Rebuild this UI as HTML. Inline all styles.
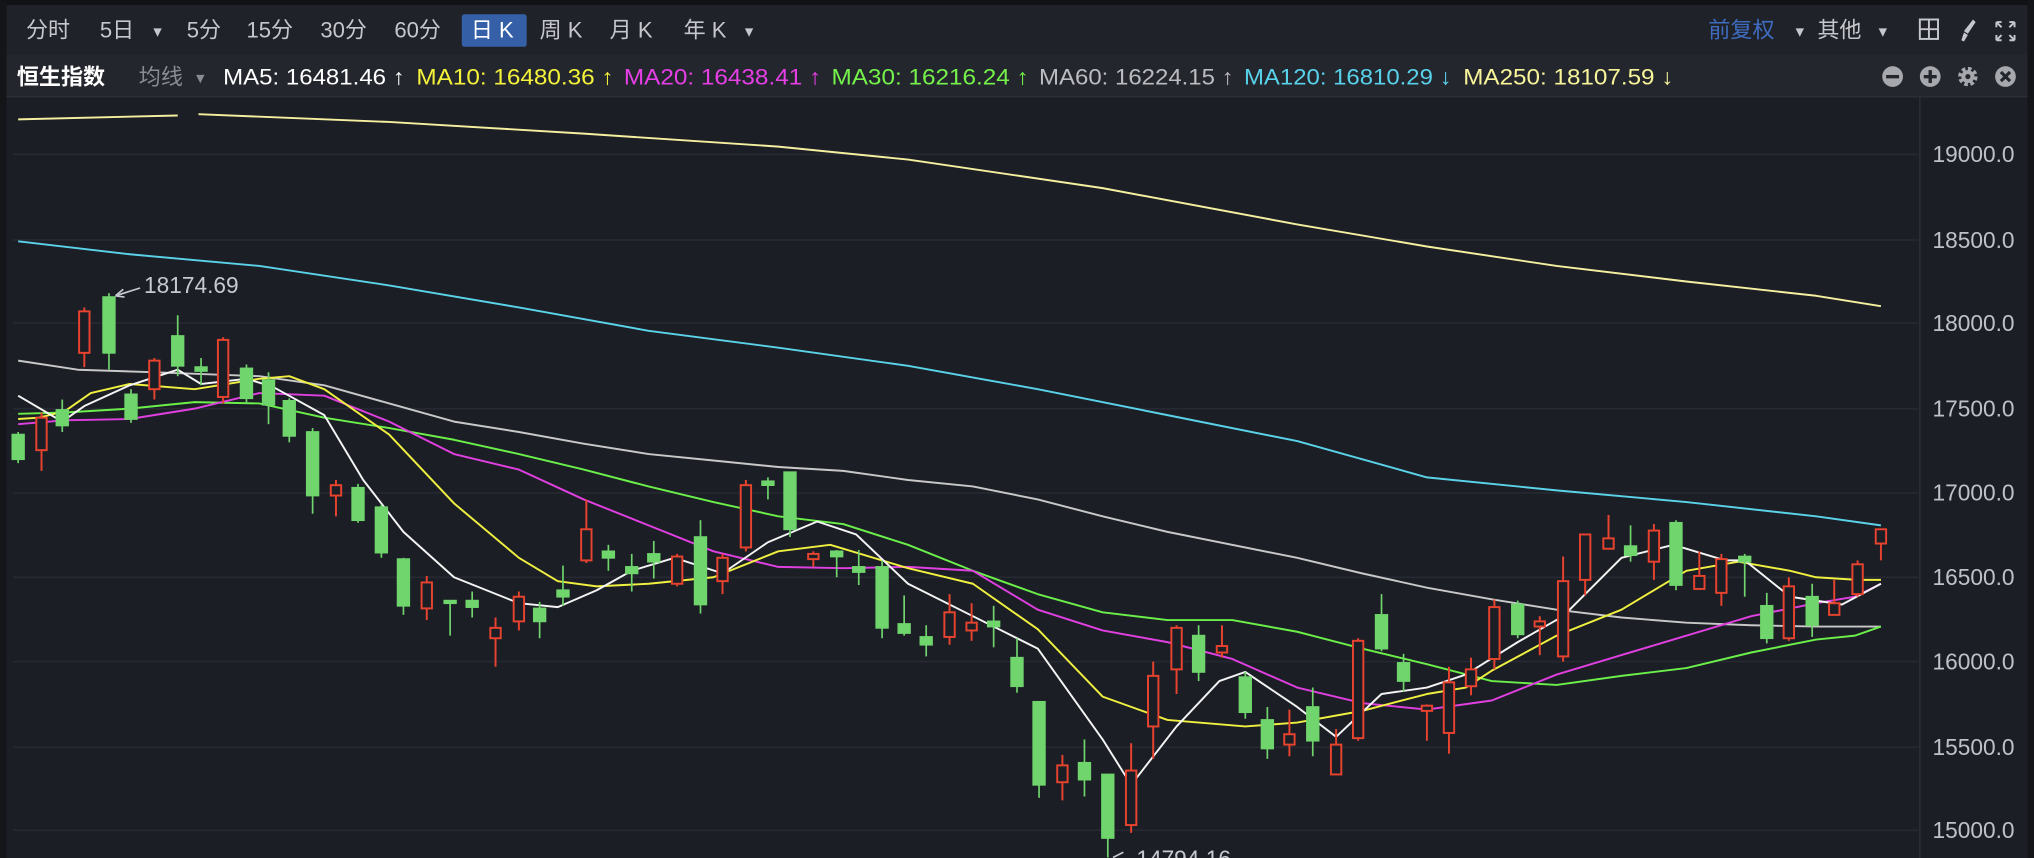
<!DOCTYPE html>
<html><head><meta charset="utf-8"><style>
html,body{margin:0;padding:0;background:#1c1e26;width:2034px;height:858px;overflow:hidden}
svg{display:block}
text{font-family:"Liberation Sans","Noto Sans CJK SC",sans-serif}
</style></head><body>
<svg width="2034" height="858" viewBox="0 0 1568 661.4" xmlns="http://www.w3.org/2000/svg">
<rect width="1568" height="661.4" fill="#1c1e26"/>
<rect x="0" y="0" width="1568" height="4" fill="#111216"/>
<rect x="0" y="4" width="1568" height="38" fill="#202229"/>
<rect x="0" y="42" width="1568" height="33" fill="#24262e"/>
<rect x="0" y="74" width="1568" height="1" fill="#2c2f38"/>
<rect x="0" y="0" width="5" height="661.4" fill="#141519"/>
<rect x="1563" y="0" width="5" height="661.4" fill="#141519"/>
<g font-size="17" fill="#c6c7cd">
<text x="20" y="29">分时</text>
<text x="77" y="29">5日</text>
<text x="116" y="28" font-size="11">▼</text>
<text x="144" y="29">5分</text>
<text x="190" y="29">15分</text>
<text x="247" y="29">30分</text>
<text x="304" y="29">60分</text>
<rect x="356" y="11" width="50" height="25" rx="2" fill="#3560a8"/>
<text x="363" y="29" fill="#fff">日 K</text>
<text x="416" y="29">周 K</text>
<text x="470" y="29">月 K</text>
<text x="527" y="29">年 K</text>
<text x="572" y="28" font-size="11">▼</text>
<text x="1317" y="29" fill="#3f6cc0">前复权</text>
<text x="1382" y="28" font-size="11">▼</text>
<text x="1401" y="29">其他</text>
<text x="1446" y="28" font-size="11">▼</text>
</g>
<g fill="none" stroke="#c6c7cd" stroke-width="1.5">
<rect x="1480" y="15" width="14" height="15"/><line x1="1487" y1="15" x2="1487" y2="30"/><line x1="1480" y1="22.5" x2="1494" y2="22.5"/>
<path d="M1539 17 l4 4 M1539 17 v4 M1539 17 h4 M1553 17 l-4 4 M1553 17 v4 M1553 17 h-4 M1539 31 l4 -4 M1539 31 v-4 M1539 31 h4 M1553 31 l-4 -4 M1553 31 v-4 M1553 31 h-4"/>
</g>
<path d="M1521 15 l2 2 l-6 9 l-3 -2 z M1514 25 l3 2 l-3 5 l-2 -1 z" fill="#c6c7cd"/>
<g font-size="17">
<text x="13" y="65" fill="#fff" font-weight="bold" font-size="17">恒生指数</text>
<text x="107" y="65" fill="#8a8c94">均线</text>
<text x="149" y="64" font-size="11" fill="#8a8c94">▼</text>
<text x="172" y="65" fill="#ffffff" textLength="140" lengthAdjust="spacingAndGlyphs">MA5: 16481.46 ↑</text>
<text x="321" y="65" fill="#f5f23a" textLength="152" lengthAdjust="spacingAndGlyphs">MA10: 16480.36 ↑</text>
<text x="481" y="65" fill="#e63fe6" textLength="152" lengthAdjust="spacingAndGlyphs">MA20: 16438.41 ↑</text>
<text x="641" y="65" fill="#74f24a" textLength="152" lengthAdjust="spacingAndGlyphs">MA30: 16216.24 ↑</text>
<text x="801" y="65" fill="#bcbcc0" textLength="150" lengthAdjust="spacingAndGlyphs">MA60: 16224.15 ↑</text>
<text x="959" y="65" fill="#58d2ea" textLength="160" lengthAdjust="spacingAndGlyphs">MA120: 16810.29 ↓</text>
<text x="1128" y="65" fill="#f8f49a" textLength="162" lengthAdjust="spacingAndGlyphs">MA250: 18107.59 ↓</text>
</g>
<g>
<circle cx="1459" cy="59" r="8" fill="#a6a8ae"/><rect x="1454" y="57.8" width="10" height="2.6" fill="#24262e"/>
<circle cx="1488" cy="59" r="8" fill="#a6a8ae"/><rect x="1483" y="57.8" width="10" height="2.6" fill="#24262e"/><rect x="1486.7" y="54" width="2.6" height="10" fill="#24262e"/>
<circle cx="1517" cy="59" r="5.5" fill="none" stroke="#a6a8ae" stroke-width="4" stroke-dasharray="2.5 1.8"/><circle cx="1517" cy="59" r="5" fill="#a6a8ae"/><circle cx="1517" cy="59" r="2" fill="#24262e"/>
<circle cx="1546" cy="59" r="8" fill="#a6a8ae"/><path d="M1542.5 55.5 l7 7 M1549.5 55.5 l-7 7" stroke="#24262e" stroke-width="2.4"/>
</g>
<g stroke="#262932" stroke-width="1.3">
<line x1="10" y1="119" x2="1479" y2="119"/><line x1="10" y1="185" x2="1479" y2="185"/><line x1="10" y1="249" x2="1479" y2="249"/><line x1="10" y1="315" x2="1479" y2="315"/><line x1="10" y1="380" x2="1479" y2="380"/><line x1="10" y1="445" x2="1479" y2="445"/><line x1="10" y1="510" x2="1479" y2="510"/><line x1="10" y1="576" x2="1479" y2="576"/><line x1="10" y1="640" x2="1479" y2="640"/>
</g>
<line x1="1480" y1="75" x2="1480" y2="661.4" stroke="#2a2d36" stroke-width="1.3"/>
<g font-size="17.5" fill="#c0c1c8" text-anchor="end">
<text x="1553" y="125">19000.0</text><text x="1553" y="191">18500.0</text><text x="1553" y="255">18000.0</text><text x="1553" y="321">17500.0</text><text x="1553" y="386">17000.0</text><text x="1553" y="451">16500.0</text><text x="1553" y="516">16000.0</text><text x="1553" y="582">15500.0</text><text x="1553" y="646">15000.0</text>
</g>
<g fill="none" stroke-width="1.5" stroke-linejoin="round">
<polyline stroke="#f5f0a0" points="14,92 137,89"/>
<polyline stroke="#f5f0a0" points="153,88 300,94 450,103 600,113 700,123 850,145 1000,173 1100,190 1200,205 1300,217 1400,228 1450,236"/>
<polyline stroke="#5ad3e8" points="14,186 100,196 200,205 300,220 400,237 500,255 600,268 700,282 800,300 900,320 1000,340 1100,368 1200,378 1300,387 1400,398 1450,405"/>
<polyline stroke="#c8c8c8" points="14,278 60,285 120,287 200,290 250,297 300,311 350,325 400,333 450,342 500,350 550,355 600,360 650,363 700,370 750,375 800,385 850,398 900,410 1000,430 1050,442 1100,453 1150,462 1200,470 1250,476 1300,480 1350,482 1400,483 1450,483"/>
<polyline stroke="#6bf04a" points="14,319 50,318 100,315 150,310 200,311 250,322 300,330 350,339 400,350 450,362 500,375 550,387 600,398 650,404 700,420 750,440 800,458 850,472 900,478 950,478 1000,487 1050,500 1100,512 1150,525 1200,528 1250,521 1300,515 1350,503 1400,493 1430,490 1450,483"/>
<polyline stroke="#e040e0" points="14,327 50,324 100,323 150,315 200,303 250,305 300,325 350,350 400,362 450,385 500,405 550,425 600,437 650,438 700,437 750,440 800,470 850,486 900,495 950,508 1000,530 1050,542 1100,547 1150,540 1200,520 1250,505 1300,490 1350,475 1400,465 1430,460 1450,450"/>
<polyline stroke="#f0f040" points="14,323 30,322 50,317 70,303 100,296 150,300 200,292 223,290 250,300 300,335 350,388 400,430 430,448 460,452 500,450 550,445 600,425 640,420 700,438 750,450 800,485 850,537 900,555 960,560 1000,557 1050,548 1100,535 1130,530 1150,517 1200,490 1250,470 1300,440 1340,433 1380,440 1400,445 1432,447 1450,447"/>
<polyline stroke="#f4f4f4" points="14,305 48,325 65,313 100,297 137,285 155,296 190,292 210,298 250,320 280,370 311,410 350,445 400,465 430,468 460,455 487,440 520,430 557,442 592,418 630,402 660,412 700,450 750,475 800,500 850,570 872,605 907,560 940,525 960,518 1000,545 1030,568 1065,535 1100,530 1130,520 1170,495 1205,475 1250,430 1290,420 1330,432 1345,432 1380,460 1420,466 1450,450"/>
</g>
<g stroke="#6fd56c" fill="#6fd56c" stroke-width="1.3">
<line x1="14" y1="333" x2="14" y2="357"/><rect x="9.5" y="335" width="9" height="19"/>
<line x1="48" y1="308" x2="48" y2="333"/><rect x="43.5" y="316" width="9" height="12"/>
<line x1="84" y1="226" x2="84" y2="285"/><rect x="79.5" y="229" width="9" height="43"/>
<line x1="101" y1="300" x2="101" y2="326"/><rect x="96.5" y="304" width="9" height="19"/>
<line x1="137" y1="243" x2="137" y2="290"/><rect x="132.5" y="259" width="9" height="23"/>
<line x1="155" y1="276" x2="155" y2="297"/><rect x="150.5" y="283" width="9" height="3"/>
<line x1="190" y1="281" x2="190" y2="311"/><rect x="185.5" y="284" width="9" height="23"/>
<line x1="207" y1="287" x2="207" y2="327"/><rect x="202.5" y="293" width="9" height="19"/>
<line x1="223" y1="307" x2="223" y2="341"/><rect x="218.5" y="309" width="9" height="27"/>
<line x1="241" y1="330" x2="241" y2="396"/><rect x="236.5" y="333" width="9" height="49"/>
<line x1="276" y1="373" x2="276" y2="403"/><rect x="271.5" y="376" width="9" height="25"/>
<line x1="294" y1="389" x2="294" y2="430"/><rect x="289.5" y="391" width="9" height="35"/>
<line x1="311" y1="430" x2="311" y2="474"/><rect x="306.5" y="431" width="9" height="36"/>
<line x1="347" y1="463" x2="347" y2="490"/><rect x="342.5" y="463" width="9" height="2"/>
<line x1="364" y1="456" x2="364" y2="476"/><rect x="359.5" y="463" width="9" height="5"/>
<line x1="416" y1="464" x2="416" y2="492"/><rect x="411.5" y="469" width="9" height="10"/>
<line x1="434" y1="436" x2="434" y2="467"/><rect x="429.5" y="455" width="9" height="5"/>
<line x1="469" y1="420" x2="469" y2="440"/><rect x="464.5" y="425" width="9" height="5"/>
<line x1="487" y1="427" x2="487" y2="456"/><rect x="482.5" y="437" width="9" height="5"/>
<line x1="504" y1="417" x2="504" y2="446"/><rect x="499.5" y="427" width="9" height="6"/>
<line x1="540" y1="401" x2="540" y2="473"/><rect x="535.5" y="414" width="9" height="52"/>
<line x1="592" y1="368" x2="592" y2="385"/><rect x="587.5" y="371" width="9" height="3"/>
<line x1="609" y1="364" x2="609" y2="414"/><rect x="604.5" y="364" width="9" height="44"/>
<line x1="645" y1="424" x2="645" y2="445"/><rect x="640.5" y="425" width="9" height="4"/>
<line x1="662" y1="424" x2="662" y2="451"/><rect x="657.5" y="437" width="9" height="4"/>
<line x1="680" y1="432" x2="680" y2="492"/><rect x="675.5" y="437" width="9" height="47"/>
<line x1="697" y1="459" x2="697" y2="490"/><rect x="692.5" y="481" width="9" height="7"/>
<line x1="714" y1="482" x2="714" y2="506"/><rect x="709.5" y="491" width="9" height="6"/>
<line x1="766" y1="467" x2="766" y2="499"/><rect x="761.5" y="479" width="9" height="4"/>
<line x1="784" y1="492" x2="784" y2="534"/><rect x="779.5" y="507" width="9" height="22"/>
<line x1="801" y1="541" x2="801" y2="615"/><rect x="796.5" y="541" width="9" height="64"/>
<line x1="836" y1="570" x2="836" y2="614"/><rect x="831.5" y="588" width="9" height="13"/>
<line x1="854" y1="597" x2="854" y2="661"/><rect x="849.5" y="597" width="9" height="49"/>
<line x1="924" y1="482" x2="924" y2="525"/><rect x="919.5" y="490" width="9" height="28"/>
<line x1="960" y1="518" x2="960" y2="554"/><rect x="955.5" y="522" width="9" height="27"/>
<line x1="977" y1="545" x2="977" y2="585"/><rect x="972.5" y="555" width="9" height="22"/>
<line x1="1012" y1="530" x2="1012" y2="583"/><rect x="1007.5" y="545" width="9" height="26"/>
<line x1="1065" y1="458" x2="1065" y2="502"/><rect x="1060.5" y="474" width="9" height="26"/>
<line x1="1082" y1="504" x2="1082" y2="533"/><rect x="1077.5" y="511" width="9" height="14"/>
<line x1="1170" y1="463" x2="1170" y2="492"/><rect x="1165.5" y="466" width="9" height="23"/>
<line x1="1257" y1="405" x2="1257" y2="433"/><rect x="1252.5" y="421" width="9" height="7"/>
<line x1="1292" y1="401" x2="1292" y2="455"/><rect x="1287.5" y="403" width="9" height="48"/>
<line x1="1345" y1="427" x2="1345" y2="460"/><rect x="1340.5" y="429" width="9" height="4"/>
<line x1="1362" y1="457" x2="1362" y2="496"/><rect x="1357.5" y="467" width="9" height="25"/>
<line x1="1397" y1="450" x2="1397" y2="491"/><rect x="1392.5" y="460" width="9" height="22"/>
</g>
<g stroke="#e8432e" fill="#1c1e26" stroke-width="1.5">
<line x1="32" y1="318" x2="32" y2="363"/><rect x="28" y="322" width="8" height="25"/>
<line x1="65" y1="237" x2="65" y2="283"/><rect x="61" y="240" width="8" height="32"/>
<line x1="119" y1="276" x2="119" y2="308"/><rect x="115" y="278" width="8" height="22"/>
<line x1="172" y1="260" x2="172" y2="311"/><rect x="168" y="262" width="8" height="44"/>
<line x1="259" y1="370" x2="259" y2="398"/><rect x="255" y="374" width="8" height="8"/>
<line x1="329" y1="444" x2="329" y2="478"/><rect x="325" y="449" width="8" height="20"/>
<line x1="382" y1="476" x2="382" y2="514"/><rect x="378" y="484" width="8" height="8"/>
<line x1="400" y1="456" x2="400" y2="486"/><rect x="396" y="460" width="8" height="19"/>
<line x1="452" y1="385" x2="452" y2="434"/><rect x="448" y="408" width="8" height="24"/>
<line x1="522" y1="427" x2="522" y2="452"/><rect x="518" y="429" width="8" height="21"/>
<line x1="557" y1="427" x2="557" y2="458"/><rect x="553" y="430" width="8" height="18"/>
<line x1="575" y1="370" x2="575" y2="425"/><rect x="571" y="374" width="8" height="48"/>
<line x1="627" y1="425" x2="627" y2="437"/><rect x="623" y="427" width="8" height="4"/>
<line x1="732" y1="458" x2="732" y2="497"/><rect x="728" y="472" width="8" height="19"/>
<line x1="749" y1="465" x2="749" y2="494"/><rect x="745" y="480" width="8" height="6"/>
<line x1="819" y1="582" x2="819" y2="617"/><rect x="815" y="590" width="8" height="13"/>
<line x1="872" y1="573" x2="872" y2="642"/><rect x="868" y="594" width="8" height="42"/>
<line x1="889" y1="510" x2="889" y2="585"/><rect x="885" y="521" width="8" height="39"/>
<line x1="907" y1="482" x2="907" y2="535"/><rect x="903" y="484" width="8" height="32"/>
<line x1="942" y1="482" x2="942" y2="507"/><rect x="938" y="498" width="8" height="5"/>
<line x1="994" y1="547" x2="994" y2="583"/><rect x="990" y="566" width="8" height="8"/>
<line x1="1030" y1="562" x2="1030" y2="597"/><rect x="1026" y="574" width="8" height="23"/>
<line x1="1047" y1="492" x2="1047" y2="571"/><rect x="1043" y="494" width="8" height="75"/>
<line x1="1100" y1="543" x2="1100" y2="571"/><rect x="1096" y="544" width="8" height="4"/>
<line x1="1117" y1="514" x2="1117" y2="581"/><rect x="1113" y="526" width="8" height="39"/>
<line x1="1134" y1="507" x2="1134" y2="536"/><rect x="1130" y="516" width="8" height="13"/>
<line x1="1152" y1="462" x2="1152" y2="516"/><rect x="1148" y="468" width="8" height="40"/>
<line x1="1187" y1="475" x2="1187" y2="505"/><rect x="1183" y="479" width="8" height="4"/>
<line x1="1205" y1="429" x2="1205" y2="510"/><rect x="1201" y="448" width="8" height="58"/>
<line x1="1222" y1="412" x2="1222" y2="459"/><rect x="1218" y="412" width="8" height="35"/>
<line x1="1240" y1="397" x2="1240" y2="423"/><rect x="1236" y="415" width="8" height="8"/>
<line x1="1275" y1="404" x2="1275" y2="447"/><rect x="1271" y="409" width="8" height="24"/>
<line x1="1310" y1="425" x2="1310" y2="454"/><rect x="1306" y="444" width="8" height="10"/>
<line x1="1327" y1="427" x2="1327" y2="467"/><rect x="1323" y="431" width="8" height="26"/>
<line x1="1379" y1="445" x2="1379" y2="494"/><rect x="1375" y="452" width="8" height="40"/>
<line x1="1414" y1="447" x2="1414" y2="474"/><rect x="1410" y="465" width="8" height="9"/>
<line x1="1432" y1="432" x2="1432" y2="460"/><rect x="1428" y="435" width="8" height="23"/>
<line x1="1450" y1="408" x2="1450" y2="432"/><rect x="1446" y="408" width="8" height="11"/>
</g>
<g stroke="#c8c8d0" stroke-width="1.3" fill="none"><path d="M108 222 L89 228 M89 228 l6 -5 M89 228 l7 1"/></g>
<text x="111" y="226" font-size="17.5" fill="#c8c8d0">18174.69</text>
<text x="876" y="668" font-size="17.5" fill="#c8c8d0">14794.16</text>
<path d="M858 661 l8 -4" stroke="#c8c8d0" stroke-width="1.3"/>
</svg>
</body></html>
